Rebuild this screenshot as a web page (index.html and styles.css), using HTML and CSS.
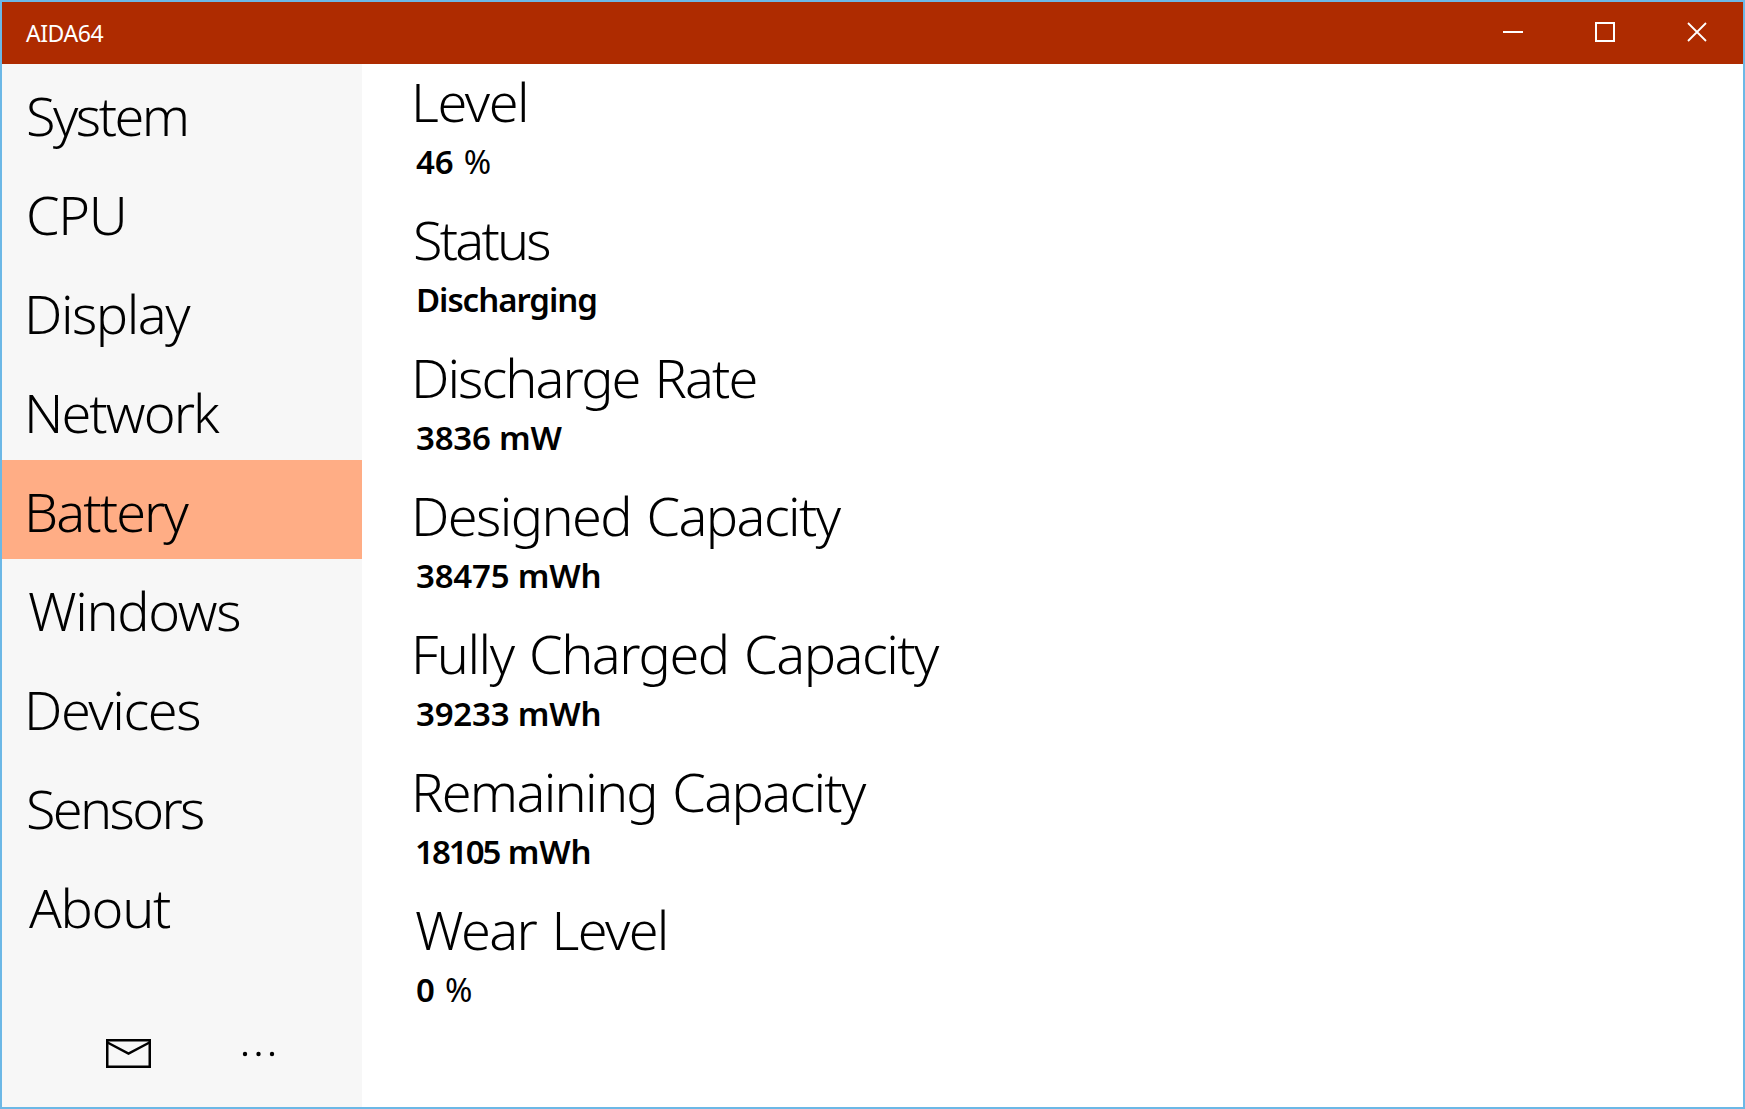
FILE: index.html
```html
<!DOCTYPE html>
<html lang="en">

<head>
    <meta charset="UTF-8">
    <meta name="viewport" content="width=device-width, initial-scale=1.0">
    <link rel="stylesheet" href="styles.css">
    <title>AIDA64</title>
</head>

<body>
    <div class="window">
        <header class="titlebar">
            <span class="titlebar-text">AIDA64</span>
            <div class="titlebar-buttons">
                <svg class="titlebar-icon" viewBox="0 0 20 20"><path d="M0 10h20" /></svg>
                <svg class="titlebar-icon" viewBox="0 0 20 20"><path d="M1 1h18v18H1z" /></svg>
                <svg class="titlebar-icon close" viewBox="0 0 20 20"><path d="M1 1l18 18M19 1L1 19" /></svg>
            </div>
        </header>

        <div class="container">
            <aside class="sidebar">
                <nav class="menu">
                    <a class="menu-item system">System</a>
                    <a class="menu-item cpu">CPU</a>
                    <a class="menu-item display">Display</a>
                    <a class="menu-item network">Network</a>
                    <a class="menu-item battery active">Battery</a>
                    <a class="menu-item windows">Windows</a>
                    <a class="menu-item devices">Devices</a>
                    <a class="menu-item sensors">Sensors</a>
                    <a class="menu-item about">About</a>
                </nav>
                <div class="sidebar-footer">
                    <svg class="icon-mail" viewBox="0 0 45 29">
                        <path d="M1.25 1.25h42.5v26.5H1.25z" />
                        <path d="M1.5 3.5l21 11 21-11" />
                    </svg>
                    <svg class="icon-more" viewBox="0 0 33 6">
                        <circle cx="3" cy="3" r="2.2" />
                        <circle cx="16.5" cy="3" r="2.2" />
                        <circle cx="30" cy="3" r="2.2" />
                    </svg>
                </div>
            </aside>

            <main class="content">
                <section class="info">
                    <h2 class="level">Level</h2>
                    <p>46 <span class="unit">%</span></p>
                </section>
                <section class="info">
                    <h2 class="status">Status</h2>
                    <p class="state">Discharging</p>
                </section>
                <section class="info">
                    <h2 class="rate">Discharge Rate</h2>
                    <p>3836 mW</p>
                </section>
                <section class="info">
                    <h2>Designed Capacity</h2>
                    <p>38475 mWh</p>
                </section>
                <section class="info">
                    <h2 class="full">Fully Charged Capacity</h2>
                    <p>39233 mWh</p>
                </section>
                <section class="info">
                    <h2 class="left">Remaining Capacity</h2>
                    <p class="remaining"><span class="digits">18105</span> mWh</p>
                </section>
                <section class="info">
                    <h2 class="wear">Wear Level</h2>
                    <p>0 <span class="unit">%</span></p>
                </section>
            </main>
        </div>
    </div>
</body>

</html>
```
FILE: styles.css
```css
* {
    box-sizing: border-box;
}

body {
    margin: 0;
    font-family: "Noto Sans", "Open Sans", sans-serif;
    color: #000;
}

.window {
    display: flex;
    flex-direction: column;
    height: 100vh;
    border: 2px solid #6cb8e6;
    background-color: #fff;
    overflow: hidden;
}

/* Title bar */
.titlebar {
    display: flex;
    justify-content: space-between;
    flex: none;
    height: 62px;
    padding-left: 24px;
    background-color: #ae2b00;
    color: #fff;
}

.titlebar-text {
    font-size: 23px;
    line-height: 62px;
    letter-spacing: -0.45px;
}

.titlebar-buttons {
    display: flex;
    gap: 72px;
    padding: 20px 36px 0 0;
}

.titlebar-icon {
    width: 20px;
    height: 20px;
    fill: none;
    stroke: #fff;
    stroke-width: 2;
}

.titlebar-icon.close {
    stroke-width: 1.8;
}

.container {
    display: flex;
    flex: 1;
    min-height: 0;
}

/* Sidebar */
.sidebar {
    display: flex;
    flex-direction: column;
    justify-content: space-between;
    width: 360px;
    background-color: #f7f7f7;
}

.menu-item {
    display: block;
    height: 99px;
    padding: 3px 0 0 22px;
    font-size: 54px;
    font-weight: 330;
    line-height: 97px;
    letter-spacing: -1.5px;
}

.menu-item.active {
    background-color: #ffad85;
}

.system {
    padding-left: 24px;
    letter-spacing: -2.5px;
}

.cpu {
    padding-left: 24px;
    letter-spacing: -1.4px;
}

.network,
.battery {
    letter-spacing: -1.9px;
}

.windows {
    padding-left: 26px;
    letter-spacing: -1.35px;
}

.devices {
    letter-spacing: -1.4px;
}

.sensors {
    padding-left: 24px;
    letter-spacing: -2.65px;
}

.about {
    padding-left: 27px;
    letter-spacing: -1.3px;
}

.sidebar-footer {
    display: flex;
    align-items: center;
    gap: 91px;
    padding: 0 0 39px 104px;
}

.icon-mail {
    width: 45px;
    height: 29px;
    fill: none;
    stroke: #000;
    stroke-width: 2.5;
}

.icon-more {
    width: 33px;
    height: 6px;
}

/* Content */
.content {
    flex: 1;
    padding: 1px 0 0 49px;
}

.info {
    height: 138px;
}

.info h2 {
    margin: 0;
    font-size: 54px;
    font-weight: 330;
    line-height: 73px;
    letter-spacing: -1.6px;
    word-spacing: 3px;
}

.info h2.level {
    letter-spacing: -1.4px;
}

.info h2.status {
    padding-left: 2px;
    letter-spacing: -2.8px;
}

.info h2.rate {
    letter-spacing: -1.95px;
}

.info h2.full {
    letter-spacing: -1.5px;
}

.info h2.left {
    letter-spacing: -1.7px;
}

.info h2.wear {
    padding-left: 4px;
    letter-spacing: -1.6px;
}

.info p {
    margin: 0;
    padding-left: 5px;
    font-size: 33px;
    font-weight: 600;
    line-height: 47px;
    letter-spacing: -0.2px;
}

.info .state {
    letter-spacing: -1.05px;
}

.info .remaining {
    padding-left: 4px;
}

.digits {
    letter-spacing: -2px;
}

.unit {
    margin-left: 2px;
    font-weight: 400;
}
```
